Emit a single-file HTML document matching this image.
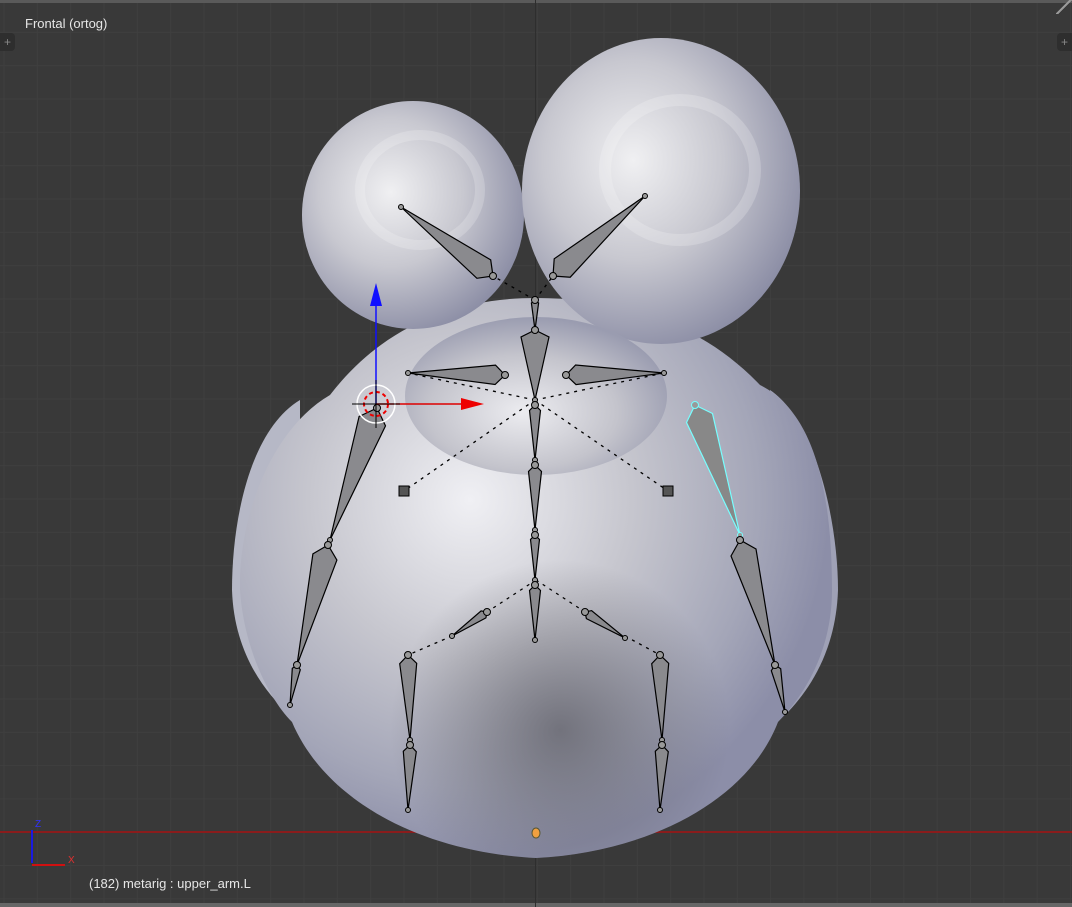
<!DOCTYPE html>
<html><head><meta charset="utf-8"><style>
html,body{margin:0;padding:0;background:#393939;}
#v{position:relative;width:1072px;height:907px;overflow:hidden;background:#393939;
background-image:linear-gradient(#3f3f3f 1px,transparent 1px),linear-gradient(90deg,#3f3f3f 1px,transparent 1px);
background-size:33.33px 33.33px;background-position:3.5px -1.5px;font-family:"Liberation Sans",sans-serif;}
.t{position:absolute;color:#e6e6e6;font-size:13px;}
</style></head><body><div id="v">
<div style="position:absolute;left:0;top:0;width:1072px;height:3px;background:#5a5a5a"></div>
<div style="position:absolute;left:0;top:903px;width:1072px;height:4px;background:#666"></div>
<div style="position:absolute;left:535px;top:0;width:1px;height:907px;background:#2e2e2e"></div>
<div class="t" style="left:25px;top:16px">Frontal (ortog)</div>
<div style="position:absolute;left:0;top:33px;width:15px;height:18px;background:#2e2e2e;border-radius:0 4px 4px 0;color:#888;font-size:12px;line-height:18px;text-align:center">+</div>
<div style="position:absolute;right:0;top:33px;width:15px;height:18px;background:#2e2e2e;border-radius:4px 0 0 4px;color:#888;font-size:12px;line-height:18px;text-align:center">+</div>
<svg width="1072" height="907" style="position:absolute;left:0;top:0" id="s">
<defs>
<radialGradient id="gb" cx="470" cy="500" r="360" gradientUnits="userSpaceOnUse">
<stop offset="0" stop-color="#f0f0f4"/><stop offset="0.45" stop-color="#c6c6ce"/><stop offset="0.8" stop-color="#a4a6b8"/><stop offset="1" stop-color="#8c8ea8"/></radialGradient>
<radialGradient id="gd" cx="560" cy="730" r="170" gradientUnits="userSpaceOnUse">
<stop offset="0" stop-color="#5e5e66" stop-opacity="0.75"/><stop offset="1" stop-color="#5e5e66" stop-opacity="0"/></radialGradient>
<radialGradient id="ge1" cx="0.4" cy="0.4" r="0.65">
<stop offset="0" stop-color="#f0f0f2"/><stop offset="0.5" stop-color="#c8c8d0"/><stop offset="1" stop-color="#8a8ca4"/></radialGradient>
<radialGradient id="gh" cx="0.45" cy="0.6" r="0.6">
<stop offset="0" stop-color="#ececf0"/><stop offset="0.6" stop-color="#c4c4cc"/><stop offset="1" stop-color="#9a9cb0"/></radialGradient>
</defs>
<line x1="0" y1="832" x2="1072" y2="832" stroke="#8a1c1c" stroke-width="2"/>
<path d="M300,400 C250,430 232,520 232,590 C234,650 262,690 290,715 L300,700 Z" fill="#b6b8c6"/>
<path d="M770,390 C815,420 838,520 838,590 C836,650 810,690 785,715 L775,700 Z" fill="#9fa1b6"/>
<path d="M330,395 C270,430 238,520 240,590 C244,650 270,700 292,722 C325,800 420,852 536,858 C650,852 748,800 778,722 C805,695 832,650 832,590 C832,480 810,410 760,385 C700,322 620,298 536,298 C450,298 380,330 330,395 Z" fill="url(#gb)"/>
<path d="M330,395 C270,430 238,520 240,590 C244,650 270,700 292,722 C325,800 420,852 536,858 C650,852 748,800 778,722 C805,695 832,650 832,590 C832,480 810,410 760,385 C700,322 620,298 536,298 C450,298 380,330 330,395 Z" fill="url(#gd)"/>
<ellipse cx="413" cy="215" rx="111" ry="114" fill="url(#ge1)"/>
<ellipse cx="661" cy="191" rx="139" ry="153" fill="url(#ge1)"/>
<ellipse cx="420" cy="190" rx="60" ry="55" fill="none" stroke="#ffffff" stroke-opacity="0.2" stroke-width="10"/>
<ellipse cx="680" cy="170" rx="75" ry="70" fill="none" stroke="#ffffff" stroke-opacity="0.2" stroke-width="12"/>
<ellipse cx="536" cy="396" rx="131" ry="79" fill="url(#gh)"/>
<g id="d" stroke="#000" stroke-width="1.3" stroke-dasharray="3,5" fill="none">
<path d="M535,400 L404,491 M535,400 L668,491 M535,300 L493,276 M535,300 L553,276 M535,400 L408,373 M535,400 L664,373 M536,580 L487,612 M536,580 L585,612 M452,636 L408,655 M625,636 L660,655"/>
</g>
<g id="b"></g>
<rect x="399" y="486" width="10" height="10" fill="#555" stroke="#000"/>
<rect x="663" y="486" width="10" height="10" fill="#555" stroke="#000"/>
<line x1="376" y1="404" x2="376" y2="300" stroke="#1010ff" stroke-width="1.5"/>
<polygon points="376,283 370,306 382,306" fill="#1010ff"/>
<line x1="376" y1="404" x2="465" y2="404" stroke="#d00" stroke-width="1.5"/>
<polygon points="484,404 461,398 461,410" fill="#e00"/>
<circle cx="376" cy="404" r="19" fill="none" stroke="#fff" stroke-width="1.5"/>
<circle cx="376" cy="404" r="12" fill="none" stroke="#e00" stroke-width="2" stroke-dasharray="4,3"/>
<line x1="352" y1="404" x2="400" y2="404" stroke="#000"/><line x1="376" y1="380" x2="376" y2="428" stroke="#000"/>
<ellipse cx="536" cy="833" rx="4" ry="5" fill="#f0a040" stroke="#553"/>
<line x1="32" y1="863" x2="32" y2="830" stroke="#1a1ae0" stroke-width="2"/>
<line x1="32" y1="865" x2="65" y2="865" stroke="#d01010" stroke-width="2"/>
<text x="35" y="827" fill="#3030ff" font-size="10" font-family="Liberation Sans">Z</text>
<text x="68" y="863" fill="#e03030" font-size="10" font-family="Liberation Sans">X</text>
</svg>
<div class="t" style="left:89px;top:876px">(182) metarig : upper_arm.L</div>
<div style="position:absolute;right:0;top:0;width:16px;height:14px;background:linear-gradient(135deg,transparent 45%,#999 45%,#999 55%,transparent 55%)"></div>
</div>
<script>
var B=[[493,276,401,207],[553,276,645,196],[535,300,535,330,0.12],[535,330,535,400,0.2],[535,405,535,460],[535,465,535,530],[535,535,535,580],[535,585,535,640],
[505,375,408,373],[566,375,664,373],[377,408,330,540],[328,545,297,665],[297,665,290,705],[695,405,740,535,0.1,1],[740,540,775,665],[775,665,785,712],
[487,612,452,636],[585,612,625,638],[408,655,410,740],[410,745,408,810],[660,655,662,740],[662,745,660,810]];
var g=document.getElementById('b'),h='';
B.forEach(function(b){var dx=b[2]-b[0],dy=b[3]-b[1],L=Math.hypot(dx,dy),w=(b[4]||0.1)*L,px=-dy/L*w,py=dx/L*w,
mx=b[0]+dx*0.1,my=b[1]+dy*0.1,c=b[5]?'#7ff':'#000';
h+='<polygon points="'+b[0]+','+b[1]+' '+(mx+px)+','+(my+py)+' '+b[2]+','+b[3]+' '+(mx-px)+','+(my-py)+'" fill="'+(b[5]?'#888':'#8a8a8e')+'" stroke="'+c+'" stroke-width="1.2"/>';
h+='<circle cx="'+b[0]+'" cy="'+b[1]+'" r="3.5" fill="#999" stroke="'+c+'"/><circle cx="'+b[2]+'" cy="'+b[3]+'" r="2.5" fill="#999" stroke="'+c+'"/>';});
g.innerHTML=h;
</script>
</body></html>
